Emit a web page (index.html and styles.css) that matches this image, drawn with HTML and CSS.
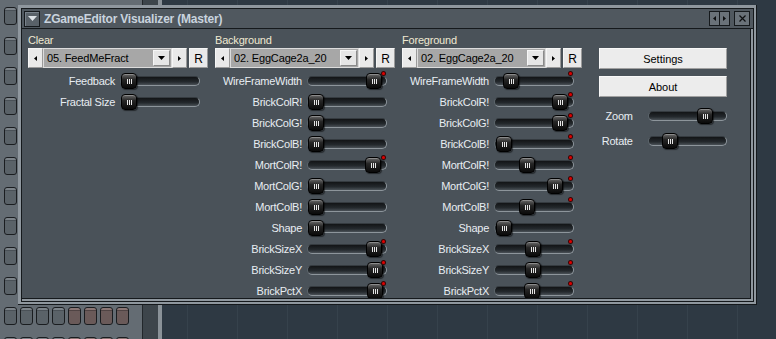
FILE: index.html
```html
<!DOCTYPE html>
<html lang="en">
<head>
    <meta charset="UTF-8">
    <title>ZGameEditor Visualizer (Master)</title>
    <link rel="stylesheet" href="styles.css">
</head>
<body>
<div class="desk">
    <div class="rack">
        <div class="rack-row"><span class="ch"></span><span class="ch"></span><span class="ch"></span><span class="ch"></span><span class="ch brown"></span><span class="ch brown"></span><span class="ch brown"></span><span class="ch brown"></span></div>
        <div class="rack-row"><span class="ch"></span><span class="ch"></span><span class="ch"></span><span class="ch"></span><span class="ch brown"></span><span class="ch brown"></span><span class="ch brown"></span><span class="ch brown"></span></div>
        <div class="rack-row"><span class="ch"></span><span class="ch"></span><span class="ch"></span><span class="ch"></span><span class="ch brown"></span><span class="ch brown"></span><span class="ch brown"></span><span class="ch brown"></span></div>
        <div class="rack-row"><span class="ch"></span><span class="ch"></span><span class="ch"></span><span class="ch"></span><span class="ch brown"></span><span class="ch brown"></span><span class="ch brown"></span><span class="ch brown"></span></div>
        <div class="rack-row"><span class="ch"></span><span class="ch"></span><span class="ch"></span><span class="ch"></span><span class="ch brown"></span><span class="ch brown"></span><span class="ch brown"></span><span class="ch brown"></span></div>
        <div class="rack-row"><span class="ch"></span><span class="ch"></span><span class="ch"></span><span class="ch"></span><span class="ch brown"></span><span class="ch brown"></span><span class="ch brown"></span><span class="ch brown"></span></div>
        <div class="rack-row"><span class="ch"></span><span class="ch"></span><span class="ch"></span><span class="ch"></span><span class="ch brown"></span><span class="ch brown"></span><span class="ch brown"></span><span class="ch brown"></span></div>
        <div class="rack-row"><span class="ch"></span><span class="ch"></span><span class="ch"></span><span class="ch"></span><span class="ch brown"></span><span class="ch brown"></span><span class="ch brown"></span><span class="ch brown"></span></div>
        <div class="rack-row"><span class="ch"></span><span class="ch"></span><span class="ch"></span><span class="ch"></span><span class="ch brown"></span><span class="ch brown"></span><span class="ch brown"></span><span class="ch brown"></span></div>
        <div class="rack-row"><span class="ch"></span><span class="ch"></span><span class="ch"></span><span class="ch"></span><span class="ch brown"></span><span class="ch brown"></span><span class="ch brown"></span><span class="ch brown"></span></div>
        <div class="rack-row"><span class="ch"></span><span class="ch"></span><span class="ch"></span><span class="ch"></span><span class="ch brown"></span><span class="ch brown"></span><span class="ch brown"></span><span class="ch brown"></span></div>
        <div class="rack-row"><span class="ch"></span><span class="ch"></span><span class="ch"></span><span class="ch"></span><span class="ch brown"></span><span class="ch brown"></span><span class="ch brown"></span><span class="ch brown"></span></div>
    </div>
    <div class="rack-edge"></div>
    <div class="playlist"></div>

    <div class="window">
        <div class="titlebar">
            <span class="menu-btn"><svg width="9" height="5" viewBox="0 0 9 5"><polygon points="0,0 9,0 4.5,5"/></svg></span>
            <span class="title">ZGameEditor Visualizer (Master)</span>
            <span class="tb-arrows">
                <span class="half"><svg width="3" height="5" viewBox="0 0 3 5"><polygon points="3,0 3,5 0,2.5"/></svg></span>
                <span class="half"><svg width="3" height="5" viewBox="0 0 3 5"><polygon points="0,0 0,5 3,2.5"/></svg></span>
            </span>
            <span class="tb-close"><svg width="7" height="7" viewBox="0 0 7 7"><path d="M0.5 0.5 L6.5 6.5 M6.5 0.5 L0.5 6.5"/></svg></span>
        </div>
        <div class="panel">
            <div class="panel-body">

                <!-- Clear -->
                <div class="col">
                    <div class="col-title">Clear</div>
                    <div class="selector">
                        <span class="sel-btn"><svg width="3" height="5" viewBox="0 0 3 5"><polygon points="3,0 3,5 0,2.5"/></svg></span>
                        <span class="field"><span class="field-text">05. FeedMeFract</span><span class="drop"><svg width="7" height="4" viewBox="0 0 7 4"><polygon points="0,0 7,0 3.5,4"/></svg></span></span>
                        <span class="sel-btn"><svg width="3" height="5" viewBox="0 0 3 5"><polygon points="0,0 0,5 3,2.5"/></svg></span>
                        <span class="sel-btn reset">R</span>
                    </div>
                    <div class="row"><span class="lbl">Feedback</span><div class="track"><span class="knob" style="left:0px"></span></div></div>
                    <div class="row"><span class="lbl">Fractal Size</span><div class="track"><span class="knob" style="left:0px"></span></div></div>
                </div>

                <!-- Background -->
                <div class="col">
                    <div class="col-title">Background</div>
                    <div class="selector">
                        <span class="sel-btn"><svg width="3" height="5" viewBox="0 0 3 5"><polygon points="3,0 3,5 0,2.5"/></svg></span>
                        <span class="field"><span class="field-text">02. EggCage2a_20</span><span class="drop"><svg width="7" height="4" viewBox="0 0 7 4"><polygon points="0,0 7,0 3.5,4"/></svg></span></span>
                        <span class="sel-btn"><svg width="3" height="5" viewBox="0 0 3 5"><polygon points="0,0 0,5 3,2.5"/></svg></span>
                        <span class="sel-btn reset">R</span>
                    </div>
                    <div class="row"><span class="lbl">WireFrameWidth</span><div class="track mod"><span class="knob" style="left:58px"></span></div></div>
                    <div class="row"><span class="lbl">BrickColR!</span><div class="track"><span class="knob" style="left:0px"></span></div></div>
                    <div class="row"><span class="lbl">BrickColG!</span><div class="track"><span class="knob" style="left:0px"></span></div></div>
                    <div class="row"><span class="lbl">BrickColB!</span><div class="track"><span class="knob" style="left:0px"></span></div></div>
                    <div class="row"><span class="lbl">MortColR!</span><div class="track mod"><span class="knob" style="left:57px"></span></div></div>
                    <div class="row"><span class="lbl">MortColG!</span><div class="track"><span class="knob" style="left:0px"></span></div></div>
                    <div class="row"><span class="lbl">MortColB!</span><div class="track"><span class="knob" style="left:0px"></span></div></div>
                    <div class="row"><span class="lbl">Shape</span><div class="track"><span class="knob" style="left:0px"></span></div></div>
                    <div class="row"><span class="lbl">BrickSizeX</span><div class="track mod"><span class="knob" style="left:58px"></span></div></div>
                    <div class="row"><span class="lbl">BrickSizeY</span><div class="track mod"><span class="knob" style="left:59px"></span></div></div>
                    <div class="row"><span class="lbl">BrickPctX</span><div class="track mod"><span class="knob" style="left:59px"></span></div></div>
                </div>

                <!-- Foreground -->
                <div class="col">
                    <div class="col-title">Foreground</div>
                    <div class="selector">
                        <span class="sel-btn"><svg width="3" height="5" viewBox="0 0 3 5"><polygon points="3,0 3,5 0,2.5"/></svg></span>
                        <span class="field"><span class="field-text">02. EggCage2a_20</span><span class="drop"><svg width="7" height="4" viewBox="0 0 7 4"><polygon points="0,0 7,0 3.5,4"/></svg></span></span>
                        <span class="sel-btn"><svg width="3" height="5" viewBox="0 0 3 5"><polygon points="0,0 0,5 3,2.5"/></svg></span>
                        <span class="sel-btn reset">R</span>
                    </div>
                    <div class="row"><span class="lbl">WireFrameWidth</span><div class="track mod"><span class="knob" style="left:8px"></span></div></div>
                    <div class="row"><span class="lbl">BrickColR!</span><div class="track mod"><span class="knob" style="left:57px"></span></div></div>
                    <div class="row"><span class="lbl">BrickColG!</span><div class="track mod"><span class="knob" style="left:57px"></span></div></div>
                    <div class="row"><span class="lbl">BrickColB!</span><div class="track mod"><span class="knob" style="left:1px"></span></div></div>
                    <div class="row"><span class="lbl">MortColR!</span><div class="track mod"><span class="knob" style="left:24px"></span></div></div>
                    <div class="row"><span class="lbl">MortColG!</span><div class="track mod"><span class="knob" style="left:52px"></span></div></div>
                    <div class="row"><span class="lbl">MortColB!</span><div class="track mod"><span class="knob" style="left:24px"></span></div></div>
                    <div class="row"><span class="lbl">Shape</span><div class="track"><span class="knob" style="left:1px"></span></div></div>
                    <div class="row"><span class="lbl">BrickSizeX</span><div class="track mod"><span class="knob" style="left:30px"></span></div></div>
                    <div class="row"><span class="lbl">BrickSizeY</span><div class="track mod"><span class="knob" style="left:30px"></span></div></div>
                    <div class="row"><span class="lbl">BrickPctX</span><div class="track mod"><span class="knob" style="left:29px"></span></div></div>
                </div>

                <!-- Settings -->
                <div class="col side">
                    <button class="btn">Settings</button>
                    <button class="btn">About</button>
                    <div class="side-rows">
                        <div class="row"><span class="lbl">Zoom</span><div class="track"><span class="knob" style="left:48px"></span></div></div>
                        <div class="row"><span class="lbl">Rotate</span><div class="track"><span class="knob" style="left:13px"></span></div></div>
                    </div>
                </div>

            </div>
        </div>
    </div>
</div>
</body>
</html>
```

FILE: styles.css
```css
body {
    margin: 0;
    background: #2e3943;
    font-family: "Liberation Sans", Arial, sans-serif;
    font-size: 11px;
    overflow: hidden;
}

.desk {
    position: relative;
    width: 776px;
    height: 339px;
    display: flex;
    overflow: hidden;
}

/* channel rack behind the plugin */
.rack {
    width: 142px;
    flex-shrink: 0;
    box-sizing: border-box;
    background: #646c73;
    padding: 7px 0 0 4px;
    display: flex;
    flex-direction: column;
    gap: 12px;
}

.rack-row {
    display: flex;
    gap: 3px;
}

.ch {
    width: 13px;
    height: 18px;
    flex-shrink: 0;
    box-sizing: border-box;
    border: 1px solid #1a1d20;
    border-radius: 3px;
    background: linear-gradient(#7c8389 0 2px, #4a5157 2px 3px, #5a6268 3px);
}

.ch.brown {
    background: linear-gradient(#8a7674 0 2px, #4f4343 2px 3px, #6a5a59 3px);
}

.rack-edge {
    width: 15px;
    flex-shrink: 0;
    background: #3d454b;
    border-left: 1px solid #22272b;
    border-right: 4px solid #8a9298;
}

.playlist {
    flex: 1;
    background-color: #2e3943;
    background-image: linear-gradient(90deg, #36424c 1px, transparent 1px);
    background-size: 50px 100%;
    background-position: 25px 0;
}

/* plugin window */
.window {
    position: absolute;
    left: 18px;
    top: 5px;
    width: 739px;
    height: 300px;
    box-sizing: border-box;
    background: #8f979e;
    border: 0 solid #15191c;
    border-width: 0 1px 1px 0;
    padding: 3px 2px 2px 3px;
    display: flex;
    flex-direction: column;
}

.titlebar {
    height: 21px;
    flex-shrink: 0;
    box-sizing: border-box;
    border: 1px solid #15191c;
    background: #50585f;
    display: flex;
    align-items: center;
    padding: 0 3px 0 2px;
}

.menu-btn {
    width: 16px;
    height: 16px;
    box-sizing: border-box;
    border: 1px solid #15191c;
    background: #596168;
    box-shadow: inset 1px 1px 0 #78818a;
    display: flex;
    align-items: center;
    justify-content: center;
}

.menu-btn svg {
    fill: #dde2e6;
}

.title {
    flex: 1;
    margin-left: 4px;
    font-weight: bold;
    font-size: 12px;
    letter-spacing: -0.2px;
    color: #c9d3de;
}

.tb-arrows {
    width: 21px;
    height: 15px;
    box-sizing: border-box;
    border: 1px solid #15191c;
    display: flex;
    background: #6a7279;
}

.tb-arrows .half {
    flex: 1;
    display: flex;
    align-items: center;
    justify-content: center;
}

.tb-arrows .half + .half {
    border-left: 1px solid #15191c;
}

.tb-arrows svg {
    fill: #0d0f11;
}

.tb-close {
    width: 16px;
    height: 15px;
    margin-left: 4px;
    box-sizing: border-box;
    border: 1px solid #15191c;
    background: #6a7279;
    display: flex;
    align-items: center;
    justify-content: center;
}

.tb-close svg {
    stroke: #0d0f11;
    stroke-width: 1.2;
}

.panel {
    flex: 1;
    display: flex;
    border: 1px solid #15191c;
    border-top: 0;
    background: #8f979e;
    padding: 0 2px 2px 0;
    min-height: 0;
}

.panel-body {
    flex: 1;
    display: flex;
    gap: 7px;
    padding: 4px 0 0 6px;
    background: #4a5259;
    border: 0 solid #15191c;
    border-width: 0 1px 1px 0;
    overflow: hidden;
}

.col {
    width: 180px;
    flex-shrink: 0;
}

.col-title {
    height: 15px;
    line-height: 14px;
    color: #efe9d2;
    letter-spacing: -0.2px;
}

.selector {
    height: 20px;
    display: flex;
    margin-bottom: 2px;
}

.sel-btn {
    width: 15px;
    box-sizing: border-box;
    border: 1px solid #f6f6f6;
    border-right-color: #9a9a9a;
    border-bottom-color: #9a9a9a;
    background: #e9e9e9;
    display: flex;
    align-items: center;
    justify-content: center;
    color: #000;
    font-size: 12px;
}

.sel-btn.reset {
    width: 19px;
    margin-left: 2px;
    padding-top: 2px;
}

.field {
    flex: 1;
    box-sizing: border-box;
    border: 1px solid #dcdcdc;
    background: #a7a7a7;
    display: flex;
    align-items: center;
    padding: 0 1px 0 3px;
}

.field-text {
    flex: 1;
    color: #000;
    letter-spacing: -0.15px;
}

.drop {
    width: 17px;
    height: 16px;
    box-sizing: border-box;
    border: 1px solid #f6f6f6;
    border-right-color: #8a8a8a;
    border-bottom-color: #8a8a8a;
    background: #e6e6e6;
    display: flex;
    align-items: center;
    justify-content: center;
}

.row {
    height: 21px;
    display: flex;
    align-items: center;
    gap: 5px;
}

.lbl {
    width: 87px;
    text-align: right;
    color: #e8edf2;
    letter-spacing: -0.25px;
    white-space: nowrap;
}

/* slider */
.track {
    position: relative;
    width: 80px;
    height: 10px;
    box-sizing: border-box;
    border: 1px solid #8d959b;
    border-top-color: #353b40;
    border-left-color: #5c646a;
    border-radius: 5px;
    background: linear-gradient(#121416, #24292d 60%, #4a5157);
}

.knob {
    position: absolute;
    top: -4px;
    width: 16px;
    height: 16px;
    box-sizing: border-box;
    border: 1px solid #000;
    border-radius: 4px;
    background: linear-gradient(#6a6a6a, #262626 40%, #0a0a0a);
    box-shadow: inset 0 1px 0 rgba(255, 255, 255, 0.25), 1px 1px 1px rgba(0, 0, 0, 0.5);
}

.knob::after {
    content: "";
    position: absolute;
    left: 5px;
    top: 5px;
    width: 5px;
    height: 5px;
    background: repeating-linear-gradient(90deg, #e6e6e6 0 1px, transparent 1px 2px);
}

.track.mod::after {
    content: "";
    position: absolute;
    right: 1px;
    top: -5px;
    width: 3px;
    height: 3px;
    border-radius: 50%;
    background: #e00000;
    box-shadow: 0 0 0 1px #3a0505;
}

/* right column */
.col.side {
    width: 128px;
    margin-left: 10px;
    padding-top: 15px;
    display: flex;
    flex-direction: column;
    gap: 7px;
}

.btn {
    height: 21px;
    box-sizing: border-box;
    border: 1px solid #f8f8f8;
    border-right-color: #a0a0a0;
    border-bottom-color: #a0a0a0;
    background: #ececec;
    font-family: "Liberation Sans", Arial, sans-serif;
    font-size: 11px;
    color: #000;
    padding: 0;
}

.side-rows {
    margin-top: 1px;
    display: flex;
    flex-direction: column;
    gap: 4px;
}

.side .lbl {
    width: 34px;
}

.side .row {
    gap: 15px;
}
```
